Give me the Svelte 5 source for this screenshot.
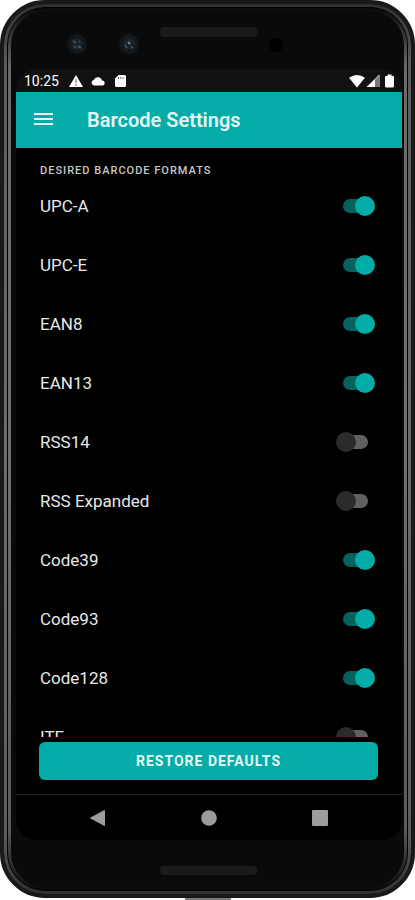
<script>
	let formats = $state([
		{ name: 'UPC-A', enabled: true },
		{ name: 'UPC-E', enabled: true },
		{ name: 'EAN8', enabled: true },
		{ name: 'EAN13', enabled: true },
		{ name: 'RSS14', enabled: false },
		{ name: 'RSS Expanded', enabled: false },
		{ name: 'Code39', enabled: true },
		{ name: 'Code93', enabled: true },
		{ name: 'Code128', enabled: true },
		{ name: 'ITF', enabled: false }
	]);

	const defaults = formats.map((format) => format.enabled);

	function restoreDefaults() {
		formats.forEach((format, i) => (format.enabled = defaults[i]));
	}
</script>

<div class="stage">
	<div class="phone">
		<div class="rim">
			<div class="inner-rim">
				<svg class="bezel" viewBox="0 0 386 58" aria-hidden="true">
					<circle cx="61" cy="33" r="10" fill="#12181c" />
					<circle cx="61" cy="33" r="6" fill="#1b2329" />
					<path d="M57 30l3 2M62 35l3 2M60 37l-2-2M63 30l1 1" stroke="#48535b" stroke-width="1.6" />
					<circle cx="113" cy="33" r="10" fill="#12181c" />
					<circle cx="113" cy="33" r="6" fill="#1b2329" />
					<path d="M112 31l2 2" stroke="#77818a" stroke-width="2" />
					<path d="M115 36l2 1M109 34l2 3" stroke="#48535b" stroke-width="1.6" />
					<rect x="144" y="16" width="97" height="10" rx="4" fill="#1b1b1b" />
					<circle cx="260" cy="34" r="7" fill="#000" />
				</svg>

				<div class="screen">
					<div class="status">
						<span class="time">10:25</span>
						<svg width="14" height="14" viewBox="0 0 14 14">
							<path d="M7 1L14 13H0z" fill="#fff" />
							<path d="M7 5v4M7 10v2" stroke="#777" stroke-width="1.2" />
						</svg>
						<svg width="14" height="14" viewBox="0 0 14 14">
							<path
								d="M3 11.4a2.800 2.800 0 0 1-.3-5.500 4.400 4.400 0 0 1 8.300.5 2.500 2.500 0 0 1 .3 5z"
								fill="#fff"
							/>
						</svg>
						<svg width="14" height="14" viewBox="0 0 14 14">
							<path
								d="M5.500 1H11.500q1.500 0 1.500 1.500v9q0 1.500-1.500 1.500h-8Q2 13 2 11.500V4.500z"
								fill="#fff"
							/>
							<path d="M5.500 3v2M7.800 3v2M10.100 3v2" stroke="#777" stroke-width="1" />
						</svg>
						<div class="signals">
							<svg width="16" height="14" viewBox="0 0 16 14">
								<path d="M0 3.800Q8-2 16 3.800L8 13.500z" fill="#fff" />
							</svg>
							<svg width="14" height="14" viewBox="0 0 14 14">
								<path d="M13.500 0.500V13H0.500z" fill="#fff" />
								<path d="M9 5.500l4.500-4V13H9z" fill="#777" />
							</svg>
							<svg class="battery" width="9" height="14" viewBox="0 0 9 14">
								<path
									d="M2.500 0.500h4v1.500h1.500q1 0 1 1v9q0 1.500-1.500 1.500h-6Q0 13.500 0 12V3q0-1 1-1h1.500z"
									fill="#fff"
								/>
							</svg>
						</div>
					</div>

					<header>
						<button class="menu" aria-label="Open menu">
							<svg width="20" height="14" viewBox="0 0 20 14">
								<path d="M0 1h19M0 6h19M0 11h19" stroke="#e4f7f6" stroke-width="2" />
							</svg>
						</button>
						<h1>Barcode Settings</h1>
					</header>

					<main>
						<h2>DESIRED BARCODE FORMATS</h2>
						{#each formats as format}
							<label>
								<span>{format.name}</span>
								<input type="checkbox" role="switch" bind:checked={format.enabled} />
							</label>
						{/each}
					</main>

					<div class="actions">
						<button class="restore" onclick={restoreDefaults}>RESTORE DEFAULTS</button>
					</div>

					<nav>
						<button aria-label="Back">
							<svg width="16" height="16" viewBox="0 0 16 16">
								<path d="M14.500 0.500v15L0.500 8z" fill="#9c9c9c" stroke="#9c9c9c" stroke-linejoin="round" />
							</svg>
						</button>
						<button aria-label="Home">
							<svg width="16" height="16" viewBox="0 0 16 16">
								<circle cx="8" cy="8" r="7.800" fill="#9c9c9c" />
							</svg>
						</button>
						<button aria-label="Recent apps">
							<svg width="16" height="16" viewBox="0 0 16 16">
								<rect width="16" height="16" rx="1" fill="#9c9c9c" />
							</svg>
						</button>
					</nav>
				</div>

				<svg class="bezel" viewBox="0 0 386 47" aria-hidden="true">
					<rect x="144" y="26" width="97" height="9" rx="4" fill="#1b1b1b" />
				</svg>
			</div>
		</div>
	</div>
	<div class="port"></div>
</div>

<style>
	:global(body) {
		background: #fff;
	}

	.stage {
		display: flex;
		flex-direction: column;
		height: 100vh;
		font-family: Roboto, 'Liberation Sans', sans-serif;
		color: #e8e8e8;
	}

	.phone,
	.rim,
	.inner-rim,
	.screen {
		display: flex;
		flex-direction: column;
		flex: 1;
		min-height: 0;
		box-sizing: border-box;
	}

	.phone {
		background: #000;
		border: 4px solid #191919;
		border-radius: 45px;
	}

	/* metal edges, fading out towards the top and bottom */
	.rim {
		border: 3px solid transparent;
		border-radius: 41px;
		padding: 1px;
		background:
			linear-gradient(#000, #000) padding-box,
			linear-gradient(#303030, #5c5c5c 60px, #6c6c6c 50%, #5c5c5c calc(100% - 60px), #303030) border-box;
	}

	.inner-rim {
		border: 3px solid transparent;
		border-radius: 37px;
		padding: 0 2px 0 5px;
		background:
			linear-gradient(#0a0a0a, #0a0a0a) padding-box,
			linear-gradient(#0a0a0a, #6a6a6a 60px, #707070 50%, #5a5a5a calc(100% - 60px), #0a0a0a) border-box;
	}

	.bezel {
		display: block;
		width: 100%;
		flex: none;
	}

	.port {
		align-self: center;
		width: 46px;
		height: 2px;
		background: #777;
	}

	.screen {
		background: #000;
		border-radius: 20px;
		overflow: hidden;
	}

	.status {
		display: flex;
		align-items: center;
		gap: 8px;
		height: 23px;
		padding: 0 8px;
		background: #111;
		color: #fff;
	}

	.time {
		font-size: 14px;
		margin-right: 2px;
	}

	.signals {
		display: flex;
		margin-left: auto;
		gap: 1px;
	}

	.battery {
		margin-left: 4px;
	}

	header {
		display: flex;
		align-items: center;
		gap: 33px;
		height: 56px;
		padding: 0 18px;
		background: #03aca7;
	}

	button {
		border: 0;
		padding: 0;
		background: none;
		font-family: inherit;
		cursor: pointer;
	}

	button svg {
		display: block;
	}

	h1 {
		margin: 0;
		font-size: 20px;
		line-height: 26px;
		font-weight: 600;
		color: #e4f7f6;
	}

	main {
		flex: 1;
		min-height: 0;
		overflow: hidden;
		padding: 0 27px 0 24px;
	}

	h2 {
		margin: 0;
		padding-top: 17px;
		font-size: 11px;
		line-height: 12px;
		font-weight: 500;
		letter-spacing: 1px;
		color: #c8c8c8;
	}

	label {
		display: flex;
		justify-content: space-between;
		align-items: center;
		height: 59px;
		font-size: 17px;
		cursor: pointer;
	}

	/* rows start right under the caption */
	h2 + label {
		height: 58px;
	}

	input {
		appearance: none;
		display: grid;
		align-items: center;
		width: 39px;
		height: 20px;
		margin: 0;
		cursor: pointer;
	}

	/* track */
	input::before {
		content: '';
		grid-area: 1 / 1;
		justify-self: center;
		width: 25px;
		height: 14px;
		border-radius: 7px;
		background: #606060;
	}

	/* thumb */
	input::after {
		content: '';
		grid-area: 1 / 1;
		justify-self: start;
		width: 20px;
		height: 20px;
		border-radius: 50%;
		background: #2b2b2b;
	}

	input:checked::before {
		background: #05625e;
	}

	input:checked::after {
		justify-self: end;
		background: #03aca7;
	}

	.actions {
		padding: 5px 24px 14px 23px;
	}

	.restore {
		display: block;
		width: 100%;
		height: 38px;
		border-radius: 6px;
		background: #03aca7;
		color: #e4f7f6;
		font-size: 14px;
		font-weight: 700;
		letter-spacing: 1px;
	}

	nav {
		display: flex;
		justify-content: center;
		gap: 95px;
		height: 45px;
		border-top: 1px solid #242424;
	}
</style>
